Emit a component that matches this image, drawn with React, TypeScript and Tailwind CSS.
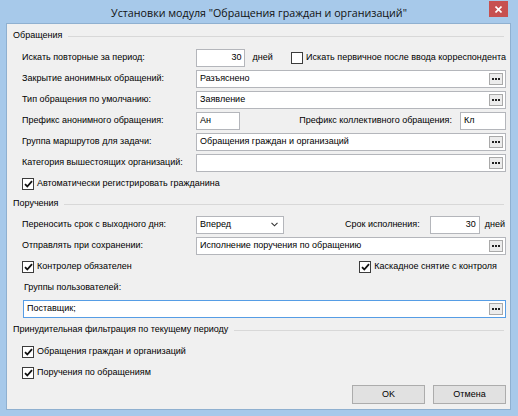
import React from 'react';

const Dots: React.FC = () => (
  <span className="ml-auto mr-[2px] flex h-[12px] w-[14px] shrink-0 items-center justify-center gap-[1px] border border-[#a9a9a9] bg-[#ececec]">
    <span className="h-[2px] w-[2px] bg-[#222]" />
    <span className="h-[2px] w-[2px] bg-[#222]" />
    <span className="h-[2px] w-[2px] bg-[#222]" />
  </span>
);

const Field: React.FC<{ value?: string; className?: string; right?: boolean; dots?: boolean; focus?: boolean }> = ({
  value = '',
  className = '',
  right,
  dots,
  focus,
}) => (
  <div
    className={`flex h-[18px] items-center border bg-white ${focus ? 'border-[#569de5]' : 'border-[#b4b6bb]'} ${className}`}
  >
    <span className={`truncate px-[3px] ${right ? 'ml-auto' : ''}`}>{value}</span>
    {dots && <Dots />}
  </div>
);

const Check: React.FC<{ label: string; checked?: boolean }> = ({ label, checked }) => (
  <div className="flex items-center whitespace-nowrap">
    <span className="flex h-[12px] w-[12px] shrink-0 items-center justify-center border border-[#3c3c3c] bg-white">
      {checked && (
        <svg width="9" height="8" viewBox="0 0 9 8">
          <path d="M1 4.2 L3.3 6.5 L8 1.2" fill="none" stroke="#111" strokeWidth="1.8" />
        </svg>
      )}
    </span>
    <span className="ml-[3px]">{label}</span>
  </div>
);

const Group: React.FC<{ title: string; className?: string }> = ({ title, className = '' }) => (
  <div className={`flex h-[14px] items-center pl-[6px] pr-[6px] ${className}`}>
    <span className="whitespace-nowrap">{title}</span>
    <div className="ml-[6px] flex-1 border-t border-[#d8d8d8]" />
  </div>
);

const Row: React.FC<{ children: React.ReactNode; className?: string }> = ({ children, className = '' }) => (
  <div className={`flex h-[21px] items-center whitespace-nowrap pl-[15px] pr-[4px] ${className}`}>{children}</div>
);

const Label: React.FC<{ text: string }> = ({ text }) => <span className="w-[174px] shrink-0">{text}</span>;

export default function App() {
  return (
    <div className="flex h-[416px] w-[518px] flex-col bg-[#a7c9ea] font-['Liberation_Sans',Arial,sans-serif] text-[9px] text-black">
      <div className="relative flex h-[23px] shrink-0 items-center justify-center pt-[3px]">
        <span className="font-['Open_Sans',sans-serif] text-[10.7px] leading-none text-[#111]">
          Установки модуля "Обращения граждан и организаций"
        </span>
        <div className="absolute right-[10px] top-[1px] flex h-[16px] w-[19px] items-center justify-center bg-[#c75050]">
          <svg width="7" height="7" viewBox="0 0 7 7">
            <path d="M0.5 0.5 L6.5 6.5 M6.5 0.5 L0.5 6.5" stroke="#fff" strokeWidth="1.6" />
          </svg>
        </div>
      </div>

      <div className="mb-[6px] ml-[6px] mr-[7px] flex flex-1 flex-col border border-[#8fb0d0] bg-[#f0f0f0]">
        <Group title="Обращения" className="mt-[5px]" />
        <Row className="mt-[4px]">
          <Label text="Искать повторные за период:" />
          <Field value="30" right className="w-[50px]" />
          <span className="ml-[7px] w-[39px]">дней</span>
          <Check label="Искать первичное после ввода корреспондента" />
        </Row>
        <Row>
          <Label text="Закрытие анонимных обращений:" />
          <Field value="Разъяснено" dots className="flex-1" />
        </Row>
        <Row>
          <Label text="Тип обращения по умолчанию:" />
          <Field value="Заявление" dots className="flex-1" />
        </Row>
        <Row>
          <Label text="Префикс анонимного обращения:" />
          <Field value="Ан" className="w-[44px]" />
          <span className="ml-auto mr-[8px]">Префикс коллективного обращения:</span>
          <Field value="Кл" className="w-[46px]" />
        </Row>
        <Row>
          <Label text="Группа маршрутов для задачи:" />
          <Field value="Обращения граждан и организаций" dots className="flex-1" />
        </Row>
        <Row>
          <Label text="Категория вышестоящих организаций:" />
          <Field dots className="flex-1" />
        </Row>
        <Row>
          <Check label="Автоматически регистрировать гражданина" checked />
        </Row>

        <Group title="Поручения" className="mt-[3px]" />
        <Row className="mt-[3px]">
          <Label text="Переносить срок с выходного дня:" />
          <div className="flex h-[18px] w-[88px] items-center border border-[#b4b6bb] bg-white pl-[3px] pr-[5px]">
            <span>Вперед</span>
            <svg className="ml-auto" width="7" height="5" viewBox="0 0 7 5">
              <path d="M0.5 0.8 L3.5 3.8 L6.5 0.8" fill="none" stroke="#333" strokeWidth="1.1" />
            </svg>
          </div>
          <span className="ml-auto mr-[10px]">Срок исполнения:</span>
          <Field value="30" right className="w-[50px]" />
          <span className="ml-[5px] mr-[1px]">дней</span>
        </Row>
        <Row>
          <Label text="Отправлять при сохранении:" />
          <Field value="Исполнение поручения по обращению" dots className="flex-1" />
        </Row>
        <Row>
          <Check label="Контролер обязателен" checked />
          <div className="ml-auto mr-[9px]">
            <Check label="Каскадное снятие с контроля" checked />
          </div>
        </Row>
        <Row className="pl-[17px]">
          <span>Группы пользователей:</span>
        </Row>
        <Row className="pl-[16px]">
          <Field value="Поставщик;" dots focus className="flex-1" />
        </Row>

        <Group title="Принудительная фильтрация по текущему периоду" className="mt-[4px]" />
        <Row className="mt-[4px]">
          <Check label="Обращения граждан и организаций" checked />
        </Row>
        <Row>
          <Check label="Поручения по обращениям" checked />
        </Row>
        <div className="mt-[2px] flex justify-end gap-[8px] pr-[4px]">
          <button className="h-[19px] w-[73px] border border-[#acacac] bg-[#e1e1e1]">OK</button>
          <button className="h-[19px] w-[73px] border border-[#acacac] bg-[#e1e1e1]">Отмена</button>
        </div>
      </div>
    </div>
  );
}
